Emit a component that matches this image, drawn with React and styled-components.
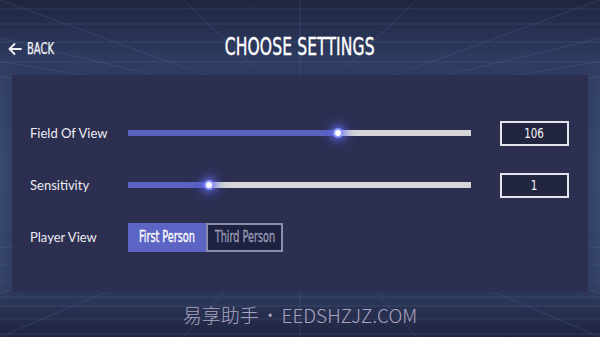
import React from 'react';
import styled, { createGlobalStyle } from 'styled-components';

const GlobalStyle = createGlobalStyle`
    html, body {
        margin: 0;
        padding: 0;
        background: #1f2540;
    }
    * {
        box-sizing: border-box;
    }
`;

const condensed = `"Liberation Sans Narrow", "DejaVu Sans Condensed", "Liberation Sans", sans-serif`;

const Screen = styled.div`
    position: relative;
    width: 600px;
    height: 337px;
    overflow: hidden;
    display: flex;
    flex-direction: column;
    background: linear-gradient(
        180deg,
        #1f2540 0%,
        #2b375a 14%,
        #35446a 24%,
        #3b4c74 50%,
        #36456b 84%,
        #283150 92%,
        #1f2440 100%
    );
`;

const Backdrop = styled.svg`
    position: absolute;
    inset: 0;
    width: 600px;
    height: 337px;
    pointer-events: none;
`;

const Header = styled.header`
    position: relative;
    height: 75px;
    padding: 32px 8px 0 8px;
    display: grid;
    grid-template-columns: 1fr auto 1fr;
    align-items: baseline;
`;

const BackButton = styled.button`
    justify-self: start;
    display: flex;
    align-items: center;
    gap: 5px;
    padding: 0;
    border: none;
    background: none;
    color: #f2f2f6;
    cursor: pointer;
    font-family: ${condensed};
    font-size: 15px;
    line-height: 20px;
    -webkit-text-stroke: 0.25px #f2f2f6;
`;

const Squeezed = styled.span`
    display: inline-block;
    transform: scaleX(${(p) => p.$x || 0.8});
    transform-origin: ${(p) => p.$origin || 'center'} center;
`;

const Title = styled.h1`
    margin: 0;
    color: #ffffff;
    font-family: ${condensed};
    font-weight: normal;
    font-size: 25px;
    line-height: 30px;
    letter-spacing: 0.2px;
    transform: scaleX(0.69);
    -webkit-text-stroke: 0.4px #ffffff;
`;

const Panel = styled.section`
    position: relative;
    height: 217px;
    margin: 0 12px;
    padding: 32px 19px 0 18px;
    background: #2c2f50;
    box-shadow: 0 0 14px rgba(20, 24, 48, 0.35);
`;

const Row = styled.div`
    display: flex;
    align-items: center;
    height: 52px;
`;

const Label = styled.span`
    width: 98px;
    flex: none;
    color: #ececf3;
    font-family: Lato, "Open Sans", sans-serif;
    font-size: 13px;
`;

const Slider = styled.div`
    position: relative;
    flex: 1;
    height: 6px;
    background: #d7d7da;
`;

const SliderFill = styled.div`
    position: absolute;
    left: 0;
    top: 0;
    bottom: 0;
    background: #5a62c2;
`;

const Thumb = styled.div`
    position: absolute;
    top: 50%;
    width: 6px;
    height: 6px;
    margin: -3px 0 0 -3px;
    border-radius: 50%;
    background: #ffffff;
    box-shadow: 0 0 0 2px #8d95ff, 0 0 6px 4px rgba(110, 118, 255, 0.65),
        0 0 12px 8px rgba(80, 90, 210, 0.35);
`;

const ValueBox = styled.div`
    width: 69px;
    height: 25px;
    margin-left: 29px;
    flex: none;
    display: flex;
    align-items: center;
    justify-content: center;
    border: 2px solid #e4e4ec;
    background: #22253f;
    color: #f4f4f8;
    font-family: ${condensed};
    font-size: 14px;
`;

const Toggle = styled.div`
    display: flex;
`;

const ToggleButton = styled.button`
    width: ${(p) => (p.$active ? '78px' : '77px')};
    height: 29px;
    padding: 0;
    display: flex;
    align-items: center;
    justify-content: center;
    white-space: nowrap;
    border: 2px solid ${(p) => (p.$active ? '#5c64c4' : '#8a8ea9')};
    background: ${(p) => (p.$active ? '#5c64c4' : '#1f2140')};
    color: ${(p) => (p.$active ? '#ffffff' : '#9a9db6')};
    font-family: ${condensed};
    font-size: 15px;
    -webkit-text-stroke: 0.3px ${(p) => (p.$active ? '#ffffff' : '#9a9db6')};
    cursor: pointer;
`;

const Footer = styled.footer`
    position: relative;
    flex: 1;
    display: flex;
    align-items: center;
    justify-content: center;
    color: #a9a3c1;
    font-family: "Noto Sans CJK SC", "Noto Sans", sans-serif;
    font-size: 19px;
    font-weight: 300;
    white-space: pre;
`;

const Dot = styled.span`
    font-family: "Noto Sans", sans-serif;
    font-size: 18px;
    margin: 0 8px;
`;

const sliders = [
    { label: 'Field Of View', value: 106, fill: 61.2 },
    { label: 'Sensitivity', value: 1, fill: 23.6 },
];

function GridLines() {
    const vpTop = { x: 300, y: 110 };
    const vpBottom = { x: 300, y: 210 };
    const spread = [-700, -380, -160, 0, 183, 300, 417, 600, 760, 980, 1300];
    const lineColor = 'rgba(150, 170, 230, 0.14)';

    return (
        <Backdrop viewBox="0 0 600 337">
            {spread.map((x) => (
                <line key={'t' + x} x1={vpTop.x} y1={vpTop.y} x2={x} y2={0}
                    stroke={lineColor} strokeWidth="1" />
            ))}
            {spread.map((x) => (
                <line key={'b' + x} x1={vpBottom.x} y1={vpBottom.y} x2={x} y2={337}
                    stroke={lineColor} strokeWidth="1" />
            ))}
            {[9, 24, 42, 62].map((y) => (
                <line key={'h' + y} x1="0" y1={y} x2="600" y2={y}
                    stroke={lineColor} strokeWidth="1" />
            ))}
            {[297, 306, 319, 334].map((y) => (
                <line key={'f' + y} x1="0" y1={y} x2="600" y2={y}
                    stroke={lineColor} strokeWidth="1" />
            ))}
        </Backdrop>
    );
}

export default function App() {
    return (
        <>
            <GlobalStyle />
            <Screen>
                <GridLines />
                <Header>
                    <BackButton>
                        <svg width="14" height="12" viewBox="0 0 14 12" fill="none">
                            <path d="M13 6H1.5M6.5 1L1.5 6L6.5 11" stroke="#f2f2f6"
                                strokeWidth="1.8" strokeLinecap="round" strokeLinejoin="round" />
                        </svg>
                        <Squeezed $x={0.74} $origin="left">BACK</Squeezed>
                    </BackButton>
                    <Title>CHOOSE SETTINGS</Title>
                </Header>
                <Panel>
                    {sliders.map((s) => (
                        <Row key={s.label}>
                            <Label>{s.label}</Label>
                            <Slider>
                                <SliderFill style={{ width: s.fill + '%' }} />
                                <Thumb style={{ left: s.fill + '%' }} />
                            </Slider>
                            <ValueBox>
                                <Squeezed $x={0.82}>{s.value}</Squeezed>
                            </ValueBox>
                        </Row>
                    ))}
                    <Row>
                        <Label>Player View</Label>
                        <Toggle>
                            <ToggleButton $active>
                                <Squeezed $x={0.72}>First Person</Squeezed>
                            </ToggleButton>
                            <ToggleButton>
                                <Squeezed $x={0.72}>Third Person</Squeezed>
                            </ToggleButton>
                        </Toggle>
                    </Row>
                </Panel>
                <Footer>
                    易享助手<Dot>•</Dot>EEDSHZJZ.COM
                </Footer>
            </Screen>
        </>
    );
}
